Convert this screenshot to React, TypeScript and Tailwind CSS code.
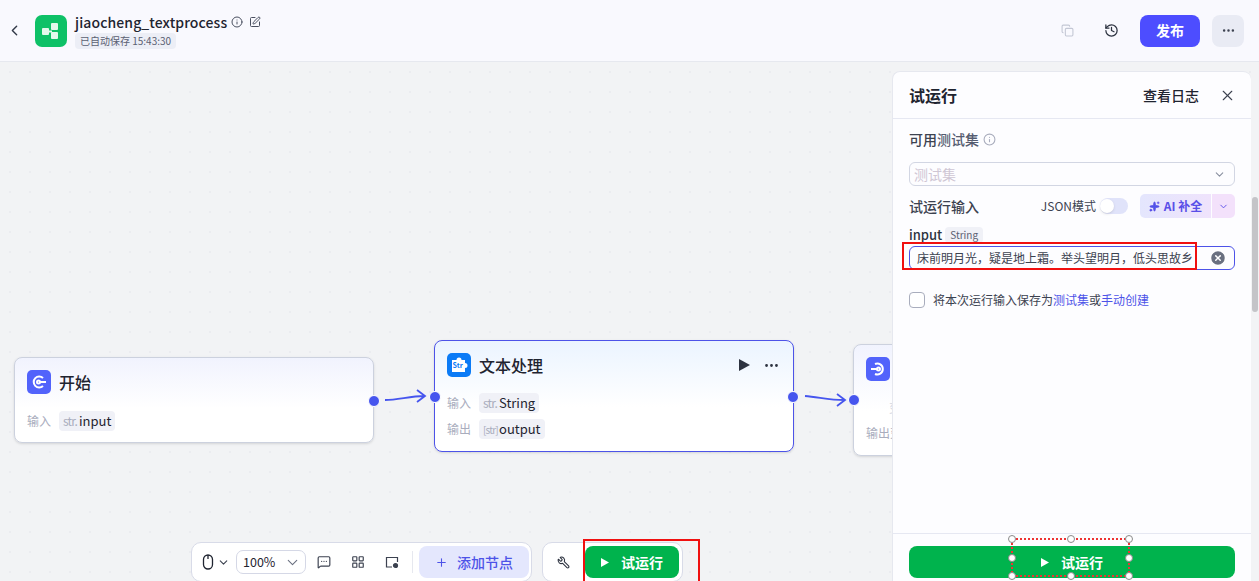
import * as React from "react";
import { ChevronLeft, ChevronDown, Info, SquarePen, History, Ellipsis, X, Plus, Wrench, MessageSquareMore, LayoutGrid, Copy, CircleX, Sparkles } from "lucide-react";

const FONT = { fontFamily: '"Noto Sans CJK SC", "Noto Sans", sans-serif' };

function Tag(props: { icon: string; text: string; small?: boolean }) {
    return (
        <span className="inline-flex items-center h-5 px-[4px] rounded-[4px] bg-[#f0f1f7] text-[13px] text-[#1f2430]">
            <span className={props.small ? "w-[16px] text-[#a9adbd] text-[10px] tracking-[-0.8px]" : "w-[16px] text-[#a9adbd] text-[12px] tracking-[-0.8px]"}>{props.icon}</span>
            {props.text}
        </span>
    );
}

function Port(props: { className: string }) {
    return <span className={`absolute w-[10px] h-[10px] rounded-full bg-[#4655ee] border border-white box-content ${props.className}`}></span>;
}

function Row(props: { label: string; icon: string; text: string; small?: boolean }) {
    return (
        <div className="flex items-center h-5 gap-[8px]">
            <span className="text-[12px] text-[#a9adbd] w-[24px] whitespace-nowrap">{props.label}</span>
            <Tag icon={props.icon} text={props.text} small={props.small} />
        </div>
    );
}

function Arrow(props: { className: string; down?: boolean }) {
    return (
        <svg className={`absolute ${props.className}`} width="44" height="20" viewBox="0 0 44 20" fill="none" stroke="#4655ee" strokeWidth="1.8">
            {props.down
                ? <path d="M1 5 C 14 6, 26 9, 40 9 M33 3 L41 9 L33 15" />
                : <path d="M1 13 C 14 13, 26 9, 40 9 M33 3 L41 9 L33 15" />}
        </svg>
    );
}

function RunButton(props: { className: string }) {
    return (
        <div className={`h-8 rounded-[8px] bg-[#00b34d] flex items-center justify-center gap-[12px] text-[14px] font-semibold text-white ${props.className}`}>
            <svg width="8" height="9" viewBox="0 0 8 9" fill="white"><path d="M0 0 L8 4.5 L0 9 Z" /></svg>
            试运行
        </div>
    );
}

function TopBar() {
    return (
        <div className="h-[62px] shrink-0 flex items-center bg-[#f9f9fe] border-b border-[#e6e8ef] pl-[6px] pr-[15px]">
            <ChevronLeft size={17} strokeWidth={2} className="text-[#333a48]" />
            <div className="ml-[12px] w-8 h-8 rounded-[7px] bg-[#0ec167] flex items-center justify-center">
                <svg width="20" height="18" viewBox="0 0 20 18" fill="#e4f8ec">
                    <rect x="1" y="6" width="7" height="7" rx="1" />
                    <rect x="10" y="1" width="7" height="7" rx="1" />
                    <rect x="10" y="10" width="7" height="7" rx="1" />
                    <rect x="7" y="8.5" width="4" height="2" />
                </svg>
            </div>
            <div className="ml-[8px] flex flex-col">
                <div className="flex items-center h-[20px]">
                    <span className="text-[14px] tracking-[0.1px] font-medium text-[#1f2430]">jiaocheng_textprocess</span>
                    <Info size={12} className="ml-[4px] text-[#4a5060]" />
                    <SquarePen size={12} className="ml-[6px] text-[#4a5060]" />
                </div>
                <span className="mt-[1px] self-start h-[16px] leading-[16px] px-[5px] rounded-[4px] bg-[#eceef6] text-[10px] text-[#5a6072]">已自动保存 15:43:30</span>
            </div>
            <div className="ml-auto flex items-center">
                <Copy size={13} className="text-[#c3c7d4] mr-[30px]" />
                <History size={15} strokeWidth={2} className="text-[#2d3340] mr-[21px]" />
                <button className="w-[60px] h-8 rounded-[8px] bg-[#4d4dff] text-white text-[14px] font-semibold">发布</button>
                <button className="ml-3 w-8 h-8 rounded-[8px] bg-[#e9ebf4] flex items-center justify-center">
                    <Ellipsis size={15} className="text-[#3c4250]" />
                </button>
            </div>
        </div>
    );
}

function Canvas() {
    return (
        <>
            <div className="absolute left-[14px] top-[295px] w-[360px] h-[86px] rounded-[8px] border border-[#ccd1de] shadow-sm bg-gradient-to-b from-[#f1f3fe] to-white to-60% px-[12px] pt-[12px]">
                <div className="flex items-center gap-[8px]">
                    <span className="w-6 h-6 rounded-[5px] bg-[#5263fb] flex items-center justify-center">
                        <svg width="16" height="16" viewBox="0 0 16 16" fill="none" stroke="white" strokeWidth="2">
                            <path d="M12 4 A5.5 5.5 0 1 0 12 12" />
                            <circle cx="7.5" cy="8" r="1.5" />
                            <path d="M8 8 H15" />
                        </svg>
                    </span>
                    <span className="text-[16px] font-medium text-[#1f2430]">开始</span>
                </div>
                <div className="mt-[17px]"><Row label="输入" icon="str." text="input" /></div>
                <Port className="right-[-7px] top-[37px]" />
            </div>
            <Arrow className="left-[384px] top-[325px]" />

            <div className="absolute left-[434px] top-[278px] w-[360px] h-[112px] rounded-[8px] border border-[#4d53e8] shadow-sm bg-gradient-to-b from-[#ebf4ff] to-white to-60% px-[12px] pt-[12px]">
                <div className="flex items-center gap-[8px]">
                    <span className="w-6 h-6 rounded-[5px] bg-[#0b7bf6] flex items-center justify-center">
                        <svg width="20" height="20" viewBox="0 0 20 20">
                            <path d="M3 5 H7.5 A2.5 2.5 0 0 1 12.5 5 H16 V8 A2.5 2.5 0 0 1 16 13 V17 H3 Z" fill="white" />
                            <text x="3.6" y="12.5" fontSize="7" fontWeight="700" fill="#0b7bf6">Str</text>
                        </svg>
                    </span>
                    <span className="text-[16px] font-medium text-[#1f2430]">文本处理</span>
                    <span className="ml-auto flex items-center gap-[13px] mr-[1px]">
                        <svg width="11" height="12" viewBox="0 0 11 12" fill="#2d3340"><path d="M0 0 L11 6 L0 12 Z" /></svg>
                        <Ellipsis size={17} className="text-[#2d3340]" />
                    </span>
                </div>
                <div className="mt-[16px] flex flex-col gap-[6px]">
                    <Row label="输入" icon="str." text="String" />
                    <Row label="输出" icon="[str]" text="output" small />
                </div>
                <Port className="left-[-6px] top-[50px]" />
                <Port className="right-[-6px] top-[50px]" />
            </div>
            <Arrow className="left-[804px] top-[329px]" down />

            <div className="absolute left-[853px] top-[282px] w-[360px] h-[112px] rounded-[8px] border border-[#ccd1de] shadow-sm bg-gradient-to-b from-[#f1f3fe] to-white to-60% px-[12px] pt-[12px]">
                <span className="w-6 h-6 rounded-[5px] bg-[#5263fb] flex items-center justify-center">
                    <svg width="16" height="16" viewBox="0 0 16 16" fill="none" stroke="white" strokeWidth="2">
                        <path d="M5 3 A5.5 5.5 0 1 1 5 13" />
                        <circle cx="8.5" cy="8" r="1.5" />
                        <path d="M1 8 H8" />
                    </svg>
                </span>
                <div className="mt-[19px] ml-[23px] text-[12px] leading-[16px] text-[#d4d6df]">变量</div>
                <div className="mt-[9px] text-[12px] leading-[16px] text-[#a9adbd]">输出变量</div>
                <Port className="left-[-6px] top-[49px]" />
            </div>

            {/* bottom toolbar */}
            <div className="absolute left-[191px] top-[480px] w-[341px] h-[40px] rounded-[10px] border border-[#d8dbe8] bg-white flex items-center pl-[10px]">
                <svg width="12" height="16" viewBox="0 0 12 16" fill="none" stroke="#1f2430" strokeWidth="1.3">
                    <rect x="1.5" y="1" width="9" height="14" rx="4.5" />
                    <path d="M6 1 V5" />
                </svg>
                <ChevronDown size={13} className="ml-[3px] text-[#3c4250]" />
                <div className="ml-[6px] w-[70px] h-6 rounded-[7px] border border-[#d5d8e6] flex items-center justify-between pl-[6px] pr-[4px] text-[12.5px] text-[#1f2430]">
                    100%
                    <ChevronDown size={17} strokeWidth={1.5} className="text-[#6a7080]" />
                </div>
                <MessageSquareMore size={14} className="ml-[11px] text-[#3c4250]" />
                <LayoutGrid size={14} className="ml-[20px] text-[#3c4250]" />
                <svg className="ml-[20px]" width="14" height="14" viewBox="0 0 14 14" fill="none" stroke="#3c4250" strokeWidth="1.2">
                    <path d="M7 12 H1.5 V2.5 H12.5 V7" />
                    <circle cx="10.5" cy="10.5" r="2" fill="#3c4250" />
                </svg>
                <span className="ml-[13px] h-[22px] border-l border-[#e6e8ef]"></span>
                <div className="ml-[6px] w-[110px] h-8 rounded-[8px] bg-[#e4e7fd] flex items-center justify-center gap-[9px] text-[14px] font-medium text-[#4d53e8]">
                    <Plus size={13} />
                    添加节点
                </div>
            </div>
            <div className="absolute left-[542px] top-[480px] w-[141px] h-[40px] rounded-[10px] border border-[#d8dbe8] bg-white flex items-center pl-[14px]">
                <Wrench size={13} className="text-[#2d3340] -scale-x-100" />
                <RunButton className="ml-[15px] w-[94px]" />
            </div>
            <div className="absolute left-[583px] top-[477px] w-[117px] h-[44px] border-2 border-[#f01010]"></div>
        </>
    );
}

function Handle(props: { className: string }) {
    return <span className={`absolute w-[8px] h-[8px] rounded-full bg-white border border-[#8a8a8a] ${props.className}`}></span>;
}

function Panel() {
    return (
        <div className="absolute left-[892px] top-[9px] w-[359px] h-[510px] rounded-t-[8px] bg-[#fdfdff] border-l border-t border-[#e6e8ef] flex flex-col">
            <div className="h-[47px] shrink-0 flex items-center pl-[16px] pr-[15px] border-b border-[#e6e8f2]">
                <span className="text-[16px] font-semibold text-[#1f2430]">试运行</span>
                <span className="ml-auto text-[14px] font-medium text-[#1f2430]">查看日志</span>
                <X size={17} strokeWidth={1.6} className="ml-[20px] text-[#3c4250]" />
            </div>
            <div className="flex-1 pl-[16px] pr-[16px] text-[#3c4250] relative">
                <div className="flex items-center mt-[10px] h-[20px] text-[14px] font-medium">
                    可用<span className="text-[#555c70]">测试集</span>
                    <Info size={13} className="ml-[4px] text-[#a9adbd]" />
                </div>
                <div className="mt-[13px] h-6 rounded-[6px] border border-[#d2d6e3] flex items-center justify-between pl-[4px] pr-[8px] text-[14px] text-[#cfc6d4]">
                    测试集
                    <ChevronDown size={13} className="text-[#8a90a0]" />
                </div>
                <div className="mt-[8px] flex items-center h-[24px]">
                    <span className="text-[14px] font-medium text-[#3c4250]">试运行输入</span>
                    <span className="ml-auto text-[12px] text-[#3c4250]">JSON模式</span>
                    <span className="ml-[4px] w-[28px] h-4 rounded-full bg-[#e0e3fa] relative">
                        <span className="absolute left-0 top-[1px] w-[14px] h-[14px] rounded-full bg-white shadow"></span>
                    </span>
                    <span className="ml-[12px] w-[71px] h-6 rounded-l-[5px] bg-gradient-to-r from-[#e4e6fd] to-[#efe3fc] flex items-center justify-center gap-[4px] text-[12px] font-semibold text-[#5a4fe8]">
                        <Sparkles size={11} fill="#4d53e8" />
                        AI 补全
                    </span>
                    <span className="ml-[1px] w-[23px] h-6 rounded-r-[5px] bg-[#f3e1fb] flex items-center justify-center">
                        <ChevronDown size={11} className="text-[#5a4fe8]" />
                    </span>
                </div>
                <div className="mt-[8px] flex items-center gap-[3px] h-[18px]">
                    <span className="text-[13px] font-medium text-[#2d3340]">input</span>
                    <span className="h-4 px-[5px] rounded-[4px] bg-[#f0f1f7] text-[10px] leading-[16px] text-[#5a6072]">String</span>
                </div>
                <div className="mt-[2px] h-6 rounded-[6px] border border-[#4d53e8] flex items-center justify-between pl-[7px] pr-[7px] text-[12px] text-[#3c4250]">
                    <span className="whitespace-nowrap">床前明月光，疑是地上霜。举头望明月，低头思故乡</span>
                    <CircleX size={18} fill="#6a7080" stroke="white" />
                </div>
                <div className="mt-[22px] flex items-center h-[16px]">
                    <span className="w-4 h-4 rounded-[4px] border border-[#a9adbd] bg-white"></span>
                    <span className="ml-[8px] text-[12px] text-[#3c4250]">将本次运行输入保存为<span className="text-[#4d53e8]">测试集</span>或<span className="text-[#4d53e8]">手动创建</span></span>
                </div>
                <div className="absolute left-[9px] top-[123px] w-[295px] h-[28px] border-2 border-[#f01010]"></div>
            </div>
            <div className="h-[48px] shrink-0 border-t border-[#e6e8f2] px-[16px] pt-[12px] relative">
                <RunButton className="" />
                <div className="absolute left-[118px] top-[4px] w-[119px] h-[39px] border-2 border-dotted border-[#ee3333]">
                    <Handle className="left-[-5px] top-[-5px]" />
                    <Handle className="left-[50%] -translate-x-1/2 top-[-5px]" />
                    <Handle className="right-[-5px] top-[-5px]" />
                    <Handle className="left-[-5px] top-[14px]" />
                    <Handle className="right-[-5px] top-[14px]" />
                    <Handle className="left-[-5px] bottom-[-5px]" />
                    <Handle className="left-[50%] -translate-x-1/2 bottom-[-5px]" />
                    <Handle className="right-[-5px] bottom-[-5px]" />
                </div>
            </div>
        </div>
    );
}

export default function App() {
    return (
        <div className="w-[1259px] h-[581px] flex flex-col overflow-hidden" style={FONT}>
            <TopBar />
            <div className="flex-1 relative bg-[#f2f3f5] bg-[radial-gradient(#ebecf0_1px,transparent_1px)] bg-[length:20px_20px]">
                <Canvas />
                <Panel />
                <div className="absolute left-[1252px] top-[135px] w-[6px] h-[115px] rounded-full bg-[#c4c4c8]"></div>
            </div>
        </div>
    );
}
